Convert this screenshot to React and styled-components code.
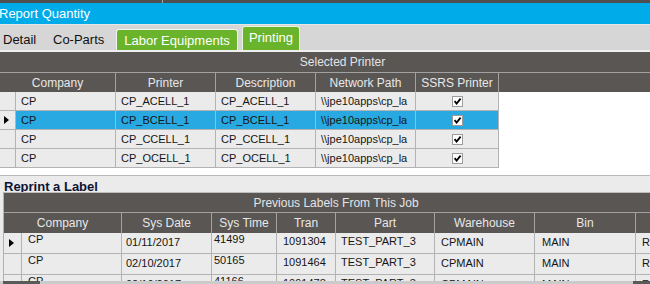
import React from "react";
import styled, { createGlobalStyle } from "styled-components";

const GlobalStyle = createGlobalStyle`
  html, body {
    margin: 0;
    padding: 0;
    background: #fff;
  }
  body {
    font-family: "Liberation Sans", Arial, sans-serif;
  }
  * {
    box-sizing: border-box;
  }
`;

const printers = [
  { company: "CP", printer: "CP_ACELL_1", desc: "CP_ACELL_1", path: "\\\\jpe10apps\\cp_la" },
  { company: "CP", printer: "CP_BCELL_1", desc: "CP_BCELL_1", path: "\\\\jpe10apps\\cp_la", selected: true },
  { company: "CP", printer: "CP_CCELL_1", desc: "CP_CCELL_1", path: "\\\\jpe10apps\\cp_la" },
  { company: "CP", printer: "CP_OCELL_1", desc: "CP_OCELL_1", path: "\\\\jpe10apps\\cp_la" },
];

const printerCols = [
  { title: "Company", w: 116 },
  { title: "Printer", w: 100 },
  { title: "Description", w: 100 },
  { title: "Network Path", w: 100 },
  { title: "SSRS Printer", w: 83 },
];

// lower grid: width, text padding-left, text padding-top
const labelCols = [
  { key: "company", title: "Company", w: 100, pl: 6, pt: 0 },
  { key: "date", title: "Sys Date", w: 90, pl: 4, pt: 3 },
  { key: "time", title: "Sys Time", w: 65, pl: 2, pt: 0 },
  { key: "tran", title: "Tran", w: 59, pl: 6, pt: 2 },
  { key: "part", title: "Part", w: 99, pl: 5, pt: 2 },
  { key: "wh", title: "Warehouse", w: 100, pl: 6, pt: 3 },
  { key: "bin", title: "Bin", w: 101, pl: 7, pt: 3 },
  { key: "extra", title: "", w: 60, pl: 6, pt: 3 },
];

const labels = [
  { company: "CP", date: "01/11/2017", time: "41499", tran: "1091304", part: "TEST_PART_3", wh: "CPMAIN", bin: "MAIN", extra: "R", current: true },
  { company: "CP", date: "02/10/2017", time: "50165", tran: "1091464", part: "TEST_PART_3", wh: "CPMAIN", bin: "MAIN", extra: "R" },
  { company: "CP", date: "02/10/2017", time: "41166", tran: "1091478", part: "TEST_PART_3", wh: "CPMAIN", bin: "MAIN", extra: "R" },
];

const Check = () => (
  <CheckBox>
    <svg width="9" height="9" viewBox="0 0 9 9">
      <path d="M1.6 4.2 L3.6 6.6 L7.6 1.6" stroke="#000" strokeWidth="1.8" fill="none" />
    </svg>
  </CheckBox>
);

const App = () => {
  return (
    <Screen>
      <GlobalStyle />
      <TopStrip>
        <StripMark />
      </TopStrip>
      <TitleBar>Report Quantity</TitleBar>
      <TabBar>
        <PlainTab $w={50}>Detail</PlainTab>
        <PlainTab $w={63}>Co-Parts</PlainTab>
        <GreenTab $w={122}>Labor Equipments</GreenTab>
        <GreenTab $w={58} $active>Printing</GreenTab>
      </TabBar>

      <Band $shift={35}>Selected Printer</Band>
      <UpperWrap>
        <HeadRow>
          {printerCols.map((c) => (
            <HeadCell key={c.title} $w={c.w}>
              {c.title}
            </HeadCell>
          ))}
        </HeadRow>
        {printers.map((p) => (
          <Row key={p.printer} $h={19}>
            <Selector $w={16} $pl={4}>{p.selected && <Arrow />}</Selector>
            <Cell $w={100} $sel={p.selected}>{p.company}</Cell>
            <Cell $w={100} $sel={p.selected}>{p.printer}</Cell>
            <Cell $w={100} $sel={p.selected}>{p.desc}</Cell>
            <Cell $w={100} $sel={p.selected}>{p.path}</Cell>
            <Cell $w={83} $sel={p.selected} $center>
              <Check />
            </Cell>
          </Row>
        ))}
      </UpperWrap>

      <LowerSection>
        <SectionTitle>Reprint a Label</SectionTitle>
        <LowerGrid>
          <Band $shift={18} $line>Previous Labels From This Job</Band>
          <HeadRow $h={21}>
            <HeadCell $w={118}>Company</HeadCell>
            {labelCols.slice(1).map((c) => (
              <HeadCell key={c.key} $w={c.w}>
                {c.title}
              </HeadCell>
            ))}
          </HeadRow>
          <Viewport>
            {labels.map((l) => (
              <Row key={l.tran} $h={21}>
                <Selector $w={18} $pl={5}>{l.current && <Arrow />}</Selector>
                {labelCols.map((c) => (
                  <Cell key={c.key} $w={c.w} $pl={c.pl} $pt={c.pt}>
                    {l[c.key]}
                  </Cell>
                ))}
              </Row>
            ))}
          </Viewport>
        </LowerGrid>
      </LowerSection>
      <Scrollbar>
        <ScrollEnd $w={37} />
        <ScrollEnd $w={17} />
      </Scrollbar>
    </Screen>
  );
};

export default App;

const Screen = styled.div`
  width: 650px;
  height: 284px;
  overflow: hidden;
  display: flex;
  flex-direction: column;
  background: #fff;
`;

const TopStrip = styled.div`
  height: 3px;
  flex: none;
  display: flex;
  padding-left: 162px;
  background: #4f4f4f;
`;

const StripMark = styled.div`
  width: 1px;
  background: #a3a3a3;
`;

const TitleBar = styled.div`
  height: 22px;
  flex: none;
  display: flex;
  align-items: center;
  text-indent: -1px;
  background: #00abea;
  border-bottom: 1px solid #e6e6e6;
  color: #fff;
  font-size: 13px;
`;

const TabBar = styled.div`
  height: 27px;
  flex: none;
  display: flex;
  align-items: flex-end;
  padding-left: 3px;
  background: #d6d6d6;
  border-bottom: 2px solid #efefef;
`;

const PlainTab = styled.div`
  width: ${({ $w }) => $w}px;
  flex: none;
  height: 21px;
  line-height: 21px;
  color: #111;
  font-size: 13px;
`;

const GreenTab = styled.div`
  width: ${({ $w }) => $w}px;
  flex: none;
  height: ${({ $active }) => ($active ? 24 : 21)}px;
  line-height: ${({ $active }) => ($active ? 22 : 21)}px;
  margin-right: 4px;
  text-align: center;
  background: #6ab42c;
  border: 1px solid ${({ $active }) => ($active ? "#e8f5dc" : "#f2f4f6")};
  border-bottom: none;
  border-radius: 3px 3px 0 0;
  color: #fff;
  font-size: 13px;
  white-space: nowrap;
`;

const Band = styled.div`
  height: 20px;
  flex: none;
  display: flex;
  align-items: center;
  justify-content: center;
  padding-left: ${({ $shift }) => $shift}px;
  background: #595654;
  border-top: ${({ $line }) => ($line ? "1px solid #bdbdbd" : "none")};
  color: #e4e4e4;
  font-size: 12px;
`;

const UpperWrap = styled.div`
  flex: none;
  display: flex;
  flex-direction: column;
  padding-bottom: 7px;
  background: #fff;
  border-bottom: 1px solid #b9b9b9;
`;

const HeadRow = styled.div`
  display: flex;
  height: ${({ $h }) => $h || 20}px;
  flex: none;
  background: #595654;
  border-top: 1px solid #a2a2a2;
`;

const HeadCell = styled.div`
  width: ${({ $w }) => $w}px;
  flex: none;
  display: flex;
  align-items: center;
  justify-content: center;
  border-right: 1px solid #a2a2a2;
  color: #e8e8e8;
  font-size: 12px;
  white-space: nowrap;
`;

const Row = styled.div`
  display: flex;
  height: ${({ $h }) => $h}px;
  flex: none;
`;

const Cell = styled.div`
  width: ${({ $w }) => $w}px;
  flex: none;
  display: flex;
  align-items: ${({ $pt }) => ($pt === undefined ? "center" : "flex-start")};
  justify-content: ${({ $center }) => ($center ? "center" : "flex-start")};
  padding-left: ${({ $center, $pl }) => ($center ? 0 : $pl ?? 5)}px;
  padding-top: ${({ $pt }) => $pt ?? 0}px;
  background: ${({ $sel }) => ($sel ? "#28a9e1" : "#ebebeb")};
  border-right: 1px solid #b3b3b3;
  border-bottom: 1px solid #b3b3b3;
  color: #151515;
  font-size: 11px;
  line-height: 13px;
  white-space: nowrap;
  overflow: hidden;
`;

const Selector = styled(Cell)`
  padding-top: 0;
  align-items: center;
`;

const Arrow = styled.span`
  width: 0;
  height: 0;
  border-left: 5px solid #000;
  border-top: 4px solid transparent;
  border-bottom: 4px solid transparent;
`;

const CheckBox = styled.span`
  width: 11px;
  height: 11px;
  margin-top: 1px;
  display: flex;
  align-items: center;
  justify-content: center;
  background: #fff;
  border: 1px solid #9c9c9c;
`;

const LowerSection = styled.div`
  flex: 1;
  display: flex;
  flex-direction: column;
  background: #ebebeb;
  min-height: 0;
`;

const SectionTitle = styled.div`
  height: 16px;
  flex: none;
  padding: 4px 0 0 4px;
  color: #0d1433;
  font-size: 13px;
  font-weight: bold;
  line-height: 13px;
  white-space: nowrap;
`;

const LowerGrid = styled.div`
  flex: 1;
  min-height: 0;
  display: flex;
  flex-direction: column;
  margin-left: 3px;
  border-left: 1px solid #b0b0b0;
`;

const Viewport = styled.div`
  flex: 1;
  min-height: 0;
  overflow: hidden;
  display: flex;
  flex-direction: column;
`;

const Scrollbar = styled.div`
  height: 3px;
  flex: none;
  display: flex;
  justify-content: space-between;
  padding-left: 3px;
  background: #cbcbcb;
`;

const ScrollEnd = styled.div`
  width: ${({ $w }) => $w}px;
  background: #5a5a5a;
`;
